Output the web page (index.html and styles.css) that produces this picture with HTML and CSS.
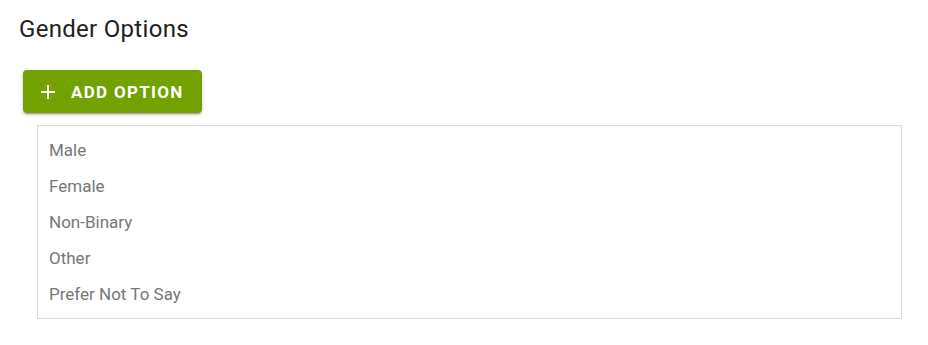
FILE: index.html
```html
<!DOCTYPE html>
<html>
<head>
<meta charset="utf-8">
<link rel="stylesheet" href="styles.css">
</head>
<body>
<div class="page">
  <h2 class="title">Gender Options</h2>
  <button class="add-btn">
    <svg class="plus" width="14" height="14" viewBox="0 0 14 14"><rect x="6" y="0" width="2" height="14" fill="#fff"/><rect x="0" y="6" width="14" height="2" fill="#fff"/></svg>
    <span>ADD OPTION</span>
  </button>
  <ul class="options">
    <li>Male</li>
    <li>Female</li>
    <li>Non-Binary</li>
    <li>Other</li>
    <li>Prefer Not To Say</li>
  </ul>
</div>
</body>
</html>
```
FILE: styles.css
```css
html, body {
  margin: 0;
  padding: 0;
  background: #fff;
  font-family: Roboto, "Liberation Sans", Arial, sans-serif;
}
.page {
  padding: 15px 26px 0 19px;
}
.title {
  margin: 0;
  font-size: 24px;
  font-weight: 400;
  line-height: 28px;
  color: #212121;
  letter-spacing: 0.3px;
}
.add-btn {
  margin: 27px 0 0 4px;
  height: 43px;
  width: 179px;
  padding: 0 0 0 18px;
  border: none;
  border-radius: 4px;
  background: #72a200;
  color: #fff;
  display: flex;
  align-items: center;
  gap: 16px;
  font-family: inherit;
  font-size: 17px;
  font-weight: 700;
  letter-spacing: 1.3px;
  box-shadow: 0 3px 1px -2px rgba(0,0,0,.2), 0 2px 2px 0 rgba(0,0,0,.14), 0 1px 5px 0 rgba(0,0,0,.12);
}
.plus {
  flex: none;
}
.options {
  list-style: none;
  margin: 12px 0 0 18px;
  padding: 6px 0 6px 11px;
  border: 1px solid #dcdcdc;
  width: 852px;
}
.options li {
  height: 36px;
  line-height: 36px;
  font-size: 17px;
  color: #777;
}
```
